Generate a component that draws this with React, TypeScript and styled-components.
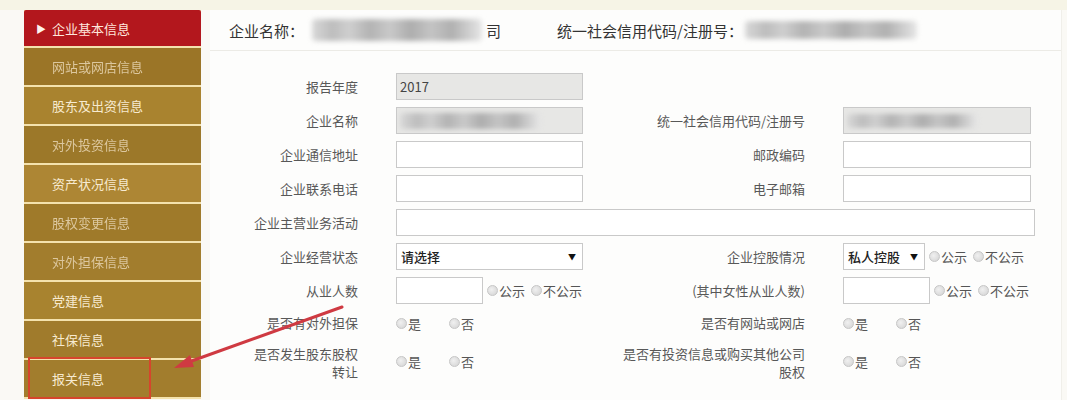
import React from "react";
import styled, { createGlobalStyle } from "styled-components";

const Global = createGlobalStyle`
  html, body { margin: 0; padding: 0; background: #f8f7f2; }
  body { font-family: "Noto Sans CJK SC", "Noto Sans", sans-serif; }
`;

const Page = styled.div`
  position: relative;
  width: 1067px;
  height: 400px;
  overflow: hidden;
  background: #faf9f5;
  &::before {
    content: "";
    position: absolute;
    left: 0; right: 0; top: 0; height: 10px;
    background: #f6f4e6;
  }
`;

const Layout = styled.div`
  display: flex;
  align-items: flex-start;
  padding: 10px 5px 0 24px;
  gap: 9px;
`;

const Sidebar = styled.nav`
  width: 177px;
  display: flex;
  flex-direction: column;
  gap: 2px;
  background: #f4e2ad;
  padding-bottom: 2px;
`;

const NavItem = styled.div<{ $bg: string; $active?: boolean; $faded?: boolean }>`
  position: relative;
  height: ${(p) => (p.$active ? "36px" : "37px")};
  background: ${(p) => p.$bg};
  display: flex;
  align-items: center;
  padding-left: ${(p) => (p.$active ? "12px" : "28px")};
  font-size: 13px;
  color: ${(p) => (p.$active ? "#ffe6dc" : p.$faded ? "#dcc79e" : "#f7ead0")};
  ${(p) => (p.$faded ? "filter: blur(0.4px);" : "")}
  ${(p) => (p.$active ? "border-radius: 2px 2px 0 0;" : "")}
`;

const Caret = styled.span`
  font-size: 10px;
  color: #fff3ee;
  margin-right: 6px;
`;

const Highlight = styled.span`
  position: absolute;
  left: 4px;
  top: -3px;
  width: 119px;
  height: 38px;
  border: 2px solid #d6452c;
  pointer-events: none;
`;

const Panel = styled.main`
  flex: 1;
  height: 390px;
  background: #fdfdfc;
  border-right: 1px solid #f0efea;
  box-sizing: border-box;
`;

const Header = styled.header`
  height: 40px;
  display: flex;
  align-items: center;
  padding-left: 19px;
  border-bottom: 1px solid #ecebe6;
  font-size: 15px;
  color: #333;
`;

const HeaderField = styled.div<{ $gap?: number }>`
  display: flex;
  align-items: center;
  margin-right: ${(p) => p.$gap ?? 0}px;
`;

const Blur = styled.span<{ $w: number; $h?: number; $left?: number }>`
  display: inline-block;
  width: ${(p) => p.$w}px;
  height: ${(p) => p.$h ?? 20}px;
  margin-left: ${(p) => p.$left ?? 0}px;
  background: linear-gradient(
    90deg,
    #d8d8d8 0%, #bdbdbd 12%, #cfcfcf 22%, #b3b3b3 34%, #c9c9c9 46%,
    #adadad 58%, #c4c4c4 70%, #b0b0b0 82%, #d4d4d4 94%, #e6e6e6 100%
  );
  filter: blur(2.5px);
  border-radius: 4px;
`;

const Form = styled.div`
  display: grid;
  grid-template-columns: 148px 187px 184px 192px;
  column-gap: 38px;
  row-gap: 7px;
  padding-top: 22px;
  align-items: center;
`;

const Label = styled.div<{ $pad?: number }>`
  text-align: right;
  font-size: 13px;
  line-height: 18px;
  color: #585858;
  padding-top: ${(p) => p.$pad ?? 0}px;
`;

const Field = styled.div<{ $span?: number; $minH?: number }>`
  grid-column: span ${(p) => p.$span ?? 1};
  display: flex;
  align-items: center;
  min-height: ${(p) => p.$minH ?? 0}px;
`;

const Input = styled.div<{ $w?: number; $disabled?: boolean }>`
  box-sizing: border-box;
  width: ${(p) => (p.$w ? `${p.$w}px` : "100%")};
  height: 27px;
  border: 1px solid #c9c9c9;
  background: ${(p) => (p.$disabled ? "#e7e7e5" : "#fff")};
  display: flex;
  align-items: center;
  padding-left: 3px;
  font-size: 13px;
  color: #444;
  overflow: hidden;
`;

const Select = styled.div<{ $w: number }>`
  box-sizing: border-box;
  width: ${(p) => p.$w}px;
  height: 27px;
  border: 1px solid #c9c9c9;
  background: #fff;
  display: flex;
  align-items: center;
  justify-content: space-between;
  padding: 0 6px 0 4px;
  font-size: 13px;
  color: #222;
  font-weight: 500;
`;

const Arrow = styled.span`
  font-size: 8px;
  color: #111;
`;

const RadioGroup = styled.div<{ $gap: number; $left?: number }>`
  display: flex;
  align-items: center;
  gap: ${(p) => p.$gap}px;
  margin-left: ${(p) => p.$left ?? 0}px;
`;

const Radio = styled.label`
  display: flex;
  align-items: center;
  gap: 1px;
  font-size: 13px;
  color: #555;
`;

const Dot = styled.span`
  width: 11px;
  height: 11px;
  border-radius: 50%;
  border: 1px solid #c6c6c6;
  background: radial-gradient(circle at 40% 40%, #f0f0f0, #d2d2d2);
  box-sizing: border-box;
`;

const Overlay = styled.svg`
  position: absolute;
  left: 160px;
  top: 295px;
  pointer-events: none;
`;

const navItems = [
  { t: "网站或网店信息", bg: "#9b7527", faded: true },
  { t: "股东及出资信息", bg: "#a9832f" },
  { t: "对外投资信息", bg: "#9c7829", faded: true },
  { t: "资产状况信息", bg: "#ad8634" },
  { t: "股权变更信息", bg: "#9f7a2a", faded: true },
  { t: "对外担保信息", bg: "#a27d2d", faded: true },
  { t: "党建信息", bg: "#a8832f" },
  { t: "社保信息", bg: "#a07b2c" },
  { t: "报关信息", bg: "#a27d2d", hl: true },
];

const Publish = ({ left }: { left: number }) => (
  <RadioGroup $gap={6} $left={left}>
    <Radio><Dot />公示</Radio>
    <Radio><Dot />不公示</Radio>
  </RadioGroup>
);

const YesNo = () => (
  <RadioGroup $gap={28}>
    <Radio><Dot />是</Radio>
    <Radio><Dot />否</Radio>
  </RadioGroup>
);

export default function App() {
  return (
    <Page>
      <Global />
      <Layout>
        <Sidebar>
          <NavItem $bg="#b3171d" $active>
            <Caret>▶</Caret>企业基本信息
          </NavItem>
          {navItems.map((n) => (
            <NavItem key={n.t} $bg={n.bg} $faded={n.faded}>
              {n.t}
              {n.hl && <Highlight />}
            </NavItem>
          ))}
        </Sidebar>
        <Panel>
          <Header>
            <HeaderField $gap={56}>
              企业名称：<Blur $w={170} $h={22} $left={8} />
              <span style={{ marginLeft: 4 }}>司</span>
            </HeaderField>
            <HeaderField>
              统一社会信用代码/注册号：<Blur $w={172} $h={18} $left={2} />
            </HeaderField>
          </Header>
          <Form>
            <Label>报告年度</Label>
            <Field><Input $disabled>2017</Input></Field>
            <div />
            <div />

            <Label>企业名称</Label>
            <Field>
              <Input $disabled><Blur $w={140} $h={16} /></Input>
            </Field>
            <Label>统一社会信用代码/注册号</Label>
            <Field>
              <Input $disabled $w={188}><Blur $w={130} $h={14} /></Input>
            </Field>

            <Label>企业通信地址</Label>
            <Field><Input /></Field>
            <Label>邮政编码</Label>
            <Field><Input $w={188} /></Field>

            <Label>企业联系电话</Label>
            <Field><Input /></Field>
            <Label>电子邮箱</Label>
            <Field><Input $w={188} /></Field>

            <Label>企业主营业务活动</Label>
            <Field $span={3}><Input /></Field>

            <Label>企业经营状态</Label>
            <Field>
              <Select $w={187}>请选择<Arrow>▼</Arrow></Select>
            </Field>
            <Label>企业控股情况</Label>
            <Field>
              <Select $w={82}>私人控股<Arrow>▼</Arrow></Select>
              <Publish left={4} />
            </Field>

            <Label>从业人数</Label>
            <Field>
              <Input $w={87} />
              <Publish left={4} />
            </Field>
            <Label>(其中女性从业人数)</Label>
            <Field>
              <Input $w={87} />
              <Publish left={4} />
            </Field>

            <Label>是否有对外担保</Label>
            <Field $minH={24}><YesNo /></Field>
            <Label>是否有网站或网店</Label>
            <Field $minH={24}><YesNo /></Field>

            <Label $pad={3}>是否发生股东股权<br />转让</Label>
            <Field><YesNo /></Field>
            <Label $pad={3}>是否有投资信息或购买其他公司<br />股权</Label>
            <Field><YesNo /></Field>
          </Form>
        </Panel>
      </Layout>
      <Overlay width="200" height="90" viewBox="0 0 200 90">
        <line x1="182" y1="12" x2="26" y2="68" stroke="#cf3a42" strokeWidth="3" strokeLinecap="round" />
        <polygon points="14,73 30,60 34,72" fill="#cf3a42" />
      </Overlay>
    </Page>
  );
}
